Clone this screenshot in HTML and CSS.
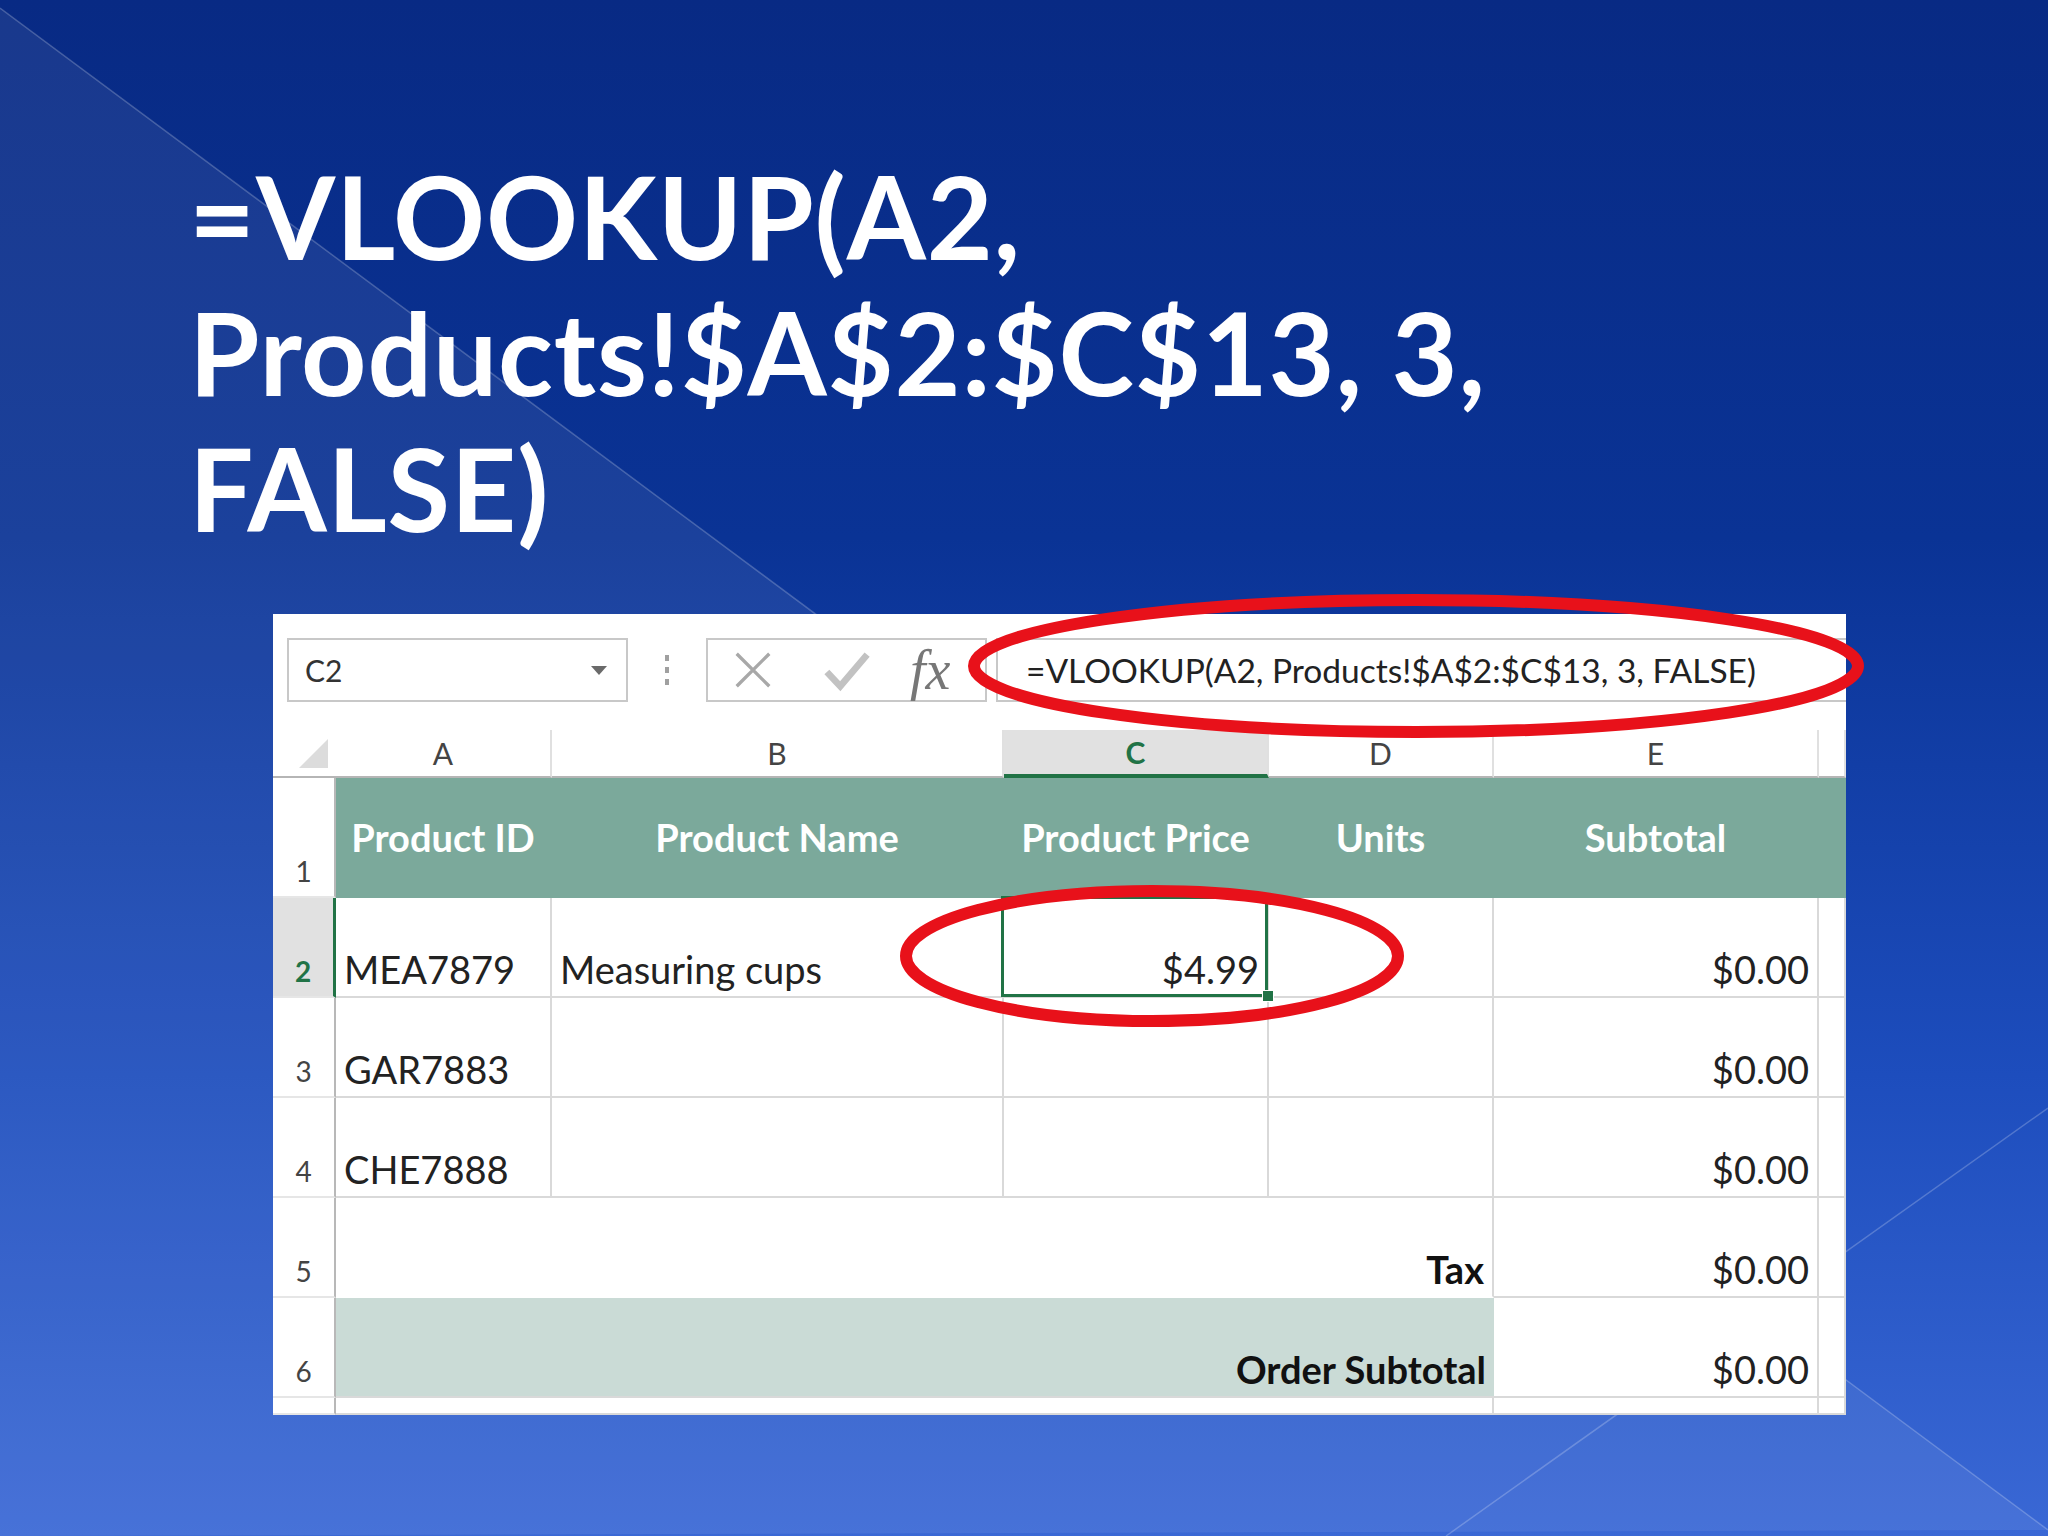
FILE: index.html
```html
<!DOCTYPE html>
<html lang="en">
<head>
    <meta charset="UTF-8">
    <title>VLOOKUP</title>
    <link rel="stylesheet" href="styles.css">
</head>
<body>
    <svg class="backdrop" viewBox="0 0 2048 1536" preserveAspectRatio="none">
        <polygon points="0,8 2048,1530 0,1536" fill="#ffffff" fill-opacity="0.07"/>
        <line x1="0" y1="8" x2="2048" y2="1530" stroke="#ffffff" stroke-opacity="0.22" stroke-width="1.5"/>
        <line x1="2048" y1="1108" x2="1446" y2="1536" stroke="#ffffff" stroke-opacity="0.22" stroke-width="1.5"/>
    </svg>

    <main class="slide">
        <h1 class="title">=VLOOKUP(A2,<br>Products!$A$2:$C$13, 3,<br>FALSE)</h1>

        <div class="sheet">
            <div class="toolbar">
                <div class="namebox"><span>C2</span><span class="caret"></span></div>
                <div class="grip"><i></i><i></i><i></i></div>
                <div class="fxbox">
                    <svg class="icon-x" viewBox="0 0 48 48"><path d="M7 7 L41 41 M41 7 L7 41"/></svg>
                    <svg class="icon-ok" viewBox="0 0 52 48"><path d="M5 26 L19 41 L47 8"/></svg>
                    <span class="fx">fx</span>
                </div>
                <div class="formula">=VLOOKUP(A2, Products!$A$2:$C$13, 3, FALSE)</div>
            </div>

            <div class="grid">
                <!-- column headers -->
                <div class="cell corner"></div>
                <div class="cell colhead">A</div>
                <div class="cell colhead">B</div>
                <div class="cell colhead active">C</div>
                <div class="cell colhead">D</div>
                <div class="cell colhead">E</div>
                <div class="cell colhead"></div>

                <!-- row 1 -->
                <div class="cell rowhead">1</div>
                <div class="cell th">Product ID</div>
                <div class="cell th">Product Name</div>
                <div class="cell th">Product Price</div>
                <div class="cell th">Units</div>
                <div class="cell th">Subtotal</div>
                <div class="cell th"></div>

                <!-- row 2 -->
                <div class="cell rowhead active">2</div>
                <div class="cell">MEA7879</div>
                <div class="cell">Measuring cups</div>
                <div class="cell num selected">$4.99</div>
                <div class="cell"></div>
                <div class="cell num">$0.00</div>
                <div class="cell"></div>

                <!-- row 3 -->
                <div class="cell rowhead">3</div>
                <div class="cell">GAR7883</div>
                <div class="cell"></div>
                <div class="cell"></div>
                <div class="cell"></div>
                <div class="cell num">$0.00</div>
                <div class="cell"></div>

                <!-- row 4 -->
                <div class="cell rowhead">4</div>
                <div class="cell">CHE7888</div>
                <div class="cell"></div>
                <div class="cell"></div>
                <div class="cell"></div>
                <div class="cell num">$0.00</div>
                <div class="cell"></div>

                <!-- row 5 -->
                <div class="cell rowhead">5</div>
                <div class="cell merged label tax">Tax</div>
                <div class="cell num">$0.00</div>
                <div class="cell"></div>

                <!-- row 6 -->
                <div class="cell rowhead">6</div>
                <div class="cell merged label total">Order Subtotal</div>
                <div class="cell num">$0.00</div>
                <div class="cell"></div>

                <!-- row 7 (cut off) -->
                <div class="cell rowhead"></div>
                <div class="cell merged"></div>
                <div class="cell"></div>
                <div class="cell"></div>
            </div>

            <svg class="marks" width="1573" height="801">
                <ellipse cx="1143" cy="52" rx="442" ry="66"/>
                <ellipse cx="879" cy="342" rx="246" ry="65"/>
            </svg>
        </div>
    </main>
</body>
</html>
```

FILE: styles.css
```css
* {
    box-sizing: border-box;
}
body {
    margin: 0;
    width: 2048px;
    height: 1536px;
    overflow: hidden;
    position: relative;
    background: linear-gradient(to bottom, #082a84 0%, #0a3395 35%, #1d4dbd 70%, #3a68d5 100%);
    font-family: 'Lato', 'Liberation Sans', sans-serif;
}
.backdrop {
    position: absolute;
    top: 0;
    left: 0;
    width: 2048px;
    height: 1536px;
}
.slide {
    position: relative;
    padding-top: 148px;
}
.title {
    margin: 0 0 0 189px;
    font-family: 'Lato', 'Liberation Sans', sans-serif;
    font-weight: bold;
    font-size: 114px;
    line-height: 136px;
    letter-spacing: 0.8px;
    color: #ffffff;
    white-space: nowrap;
}

/* spreadsheet screenshot */
.sheet {
    position: relative;
    margin: 58px 0 0 273px;
    width: 1573px;
    height: 801px;
    background: #ffffff;
    color: #222222;
}
.toolbar {
    height: 116px;
    display: flex;
    align-items: flex-start;
    padding: 24px 0 0 14px;
}
.namebox {
    width: 341px;
    height: 64px;
    border: 2px solid #c8c8c8;
    display: flex;
    align-items: center;
    justify-content: space-between;
    padding: 0 19px 0 16px;
    font-size: 30px;
    color: #333;
}
.caret {
    width: 0;
    height: 0;
    border-left: 8px solid transparent;
    border-right: 8px solid transparent;
    border-top: 9px solid #6a6a6a;
}
.grip {
    width: 78px;
    height: 64px;
    display: flex;
    flex-direction: column;
    align-items: center;
    justify-content: center;
    gap: 6px;
}
.grip i {
    width: 4px;
    height: 6px;
    background: #a0a0a0;
}
.fxbox {
    width: 281px;
    height: 64px;
    border: 2px solid #c8c8c8;
    display: flex;
    align-items: center;
    padding-left: 22px;
}
.icon-x {
    width: 46px;
    height: 46px;
    fill: none;
    stroke: #a8a8a8;
    stroke-width: 3.5;
}
.icon-ok {
    width: 50px;
    height: 46px;
    margin-left: 46px;
    fill: none;
    stroke: #c2c2c2;
    stroke-width: 7;
}
.fx {
    margin-left: 38px;
    font-family: 'Liberation Serif', serif;
    font-style: italic;
    font-size: 56px;
    color: #777;
    line-height: 1;
}
.formula {
    flex: 1;
    height: 64px;
    margin-left: 9px;
    border: 2px solid #c8c8c8;
    border-right: none;
    display: flex;
    align-items: center;
    padding-left: 28px;
    font-size: 33.5px;
    color: #222;
    white-space: nowrap;
}

.grid {
    display: grid;
    grid-template-columns: 63px 216px 452px 265px 225px 325px 27px;
    grid-template-rows: 48px 120px repeat(5, 100px) 17px;
}
.cell {
    border-right: 2px solid #d9d9d9;
    border-bottom: 2px solid #d9d9d9;
    display: flex;
    align-items: flex-end;
    padding: 0 8px 4px 8px;
    font-size: 38px;
    white-space: nowrap;
    overflow: visible;
}
.num {
    justify-content: flex-end;
}
.corner {
    position: relative;
    border-right: none;
    border-bottom: 2px solid #b5b5b5;
}
.corner::after {
    content: '';
    position: absolute;
    right: 8px;
    bottom: 8px;
    width: 29px;
    height: 29px;
    background: #dcdcdc;
    clip-path: polygon(100% 0, 100% 100%, 0 100%);
}
.colhead {
    align-items: center;
    justify-content: center;
    padding: 0;
    font-size: 30px;
    color: #444;
    border-right-color: #e0e0e0;
    border-bottom: 2px solid #b5b5b5;
}
.colhead.active {
    background: #e1e1e1;
    color: #217346;
    font-weight: bold;
    border-bottom: 4px solid #217346;
}
.rowhead {
    justify-content: center;
    padding: 0 0 8px 0;
    font-size: 28px;
    color: #444;
    border-right: 2px solid #b8b8b8;
    border-bottom-color: #e6e6e6;
}
.rowhead.active {
    background: #e1e1e1;
    color: #217346;
    font-weight: bold;
    border-right: 3px solid #217346;
}
.th {
    background: #7ba99b;
    border-color: transparent;
    align-items: center;
    justify-content: center;
    padding: 0;
    color: #ffffff;
    font-weight: bold;
}
.selected {
    position: relative;
}
.selected::after {
    content: '';
    position: absolute;
    top: -2px;
    left: -3px;
    right: -1px;
    bottom: -1px;
    border: 3px solid #217346;
}
.selected::before {
    content: '';
    position: absolute;
    right: -7px;
    bottom: -6px;
    width: 10px;
    height: 10px;
    background: #217346;
    border: 1px solid #ffffff;
    z-index: 1;
}
.merged {
    grid-column: span 4;
}
.label {
    justify-content: flex-end;
    font-weight: bold;
    color: #111;
    padding-right: 8px;
}
.tax {
    border-right-color: #d9d9d9;
    border-bottom-color: transparent;
}
.total {
    background: #cadbd6;
    border-right: none;
}

.marks {
    position: absolute;
    top: 0;
    left: 0;
    overflow: visible;
    pointer-events: none;
}
.marks ellipse {
    fill: none;
    stroke: #e8111a;
    stroke-width: 12;
}
```
